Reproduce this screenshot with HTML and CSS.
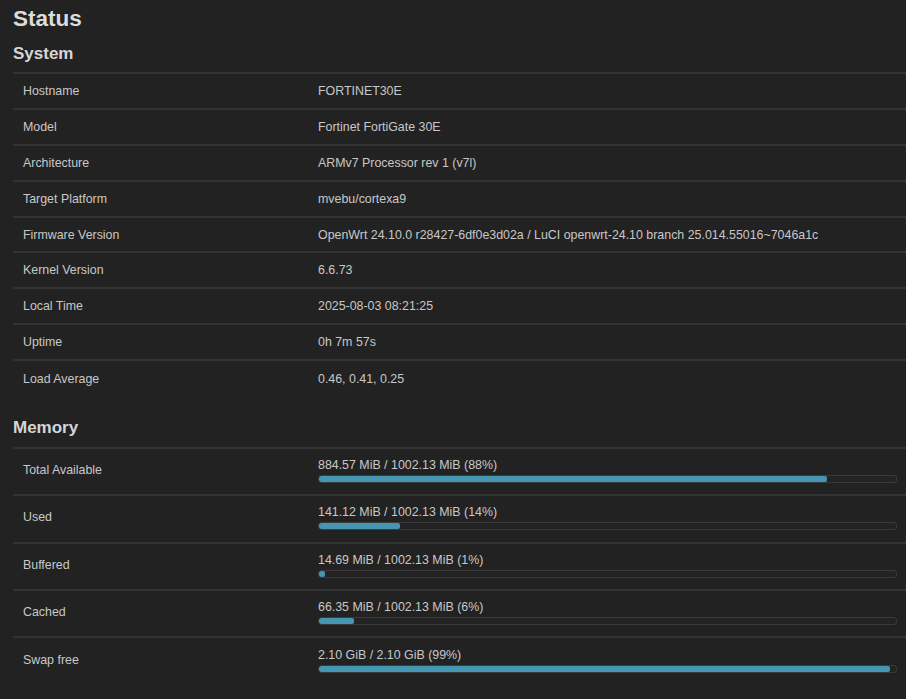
FILE: index.html
```html
<!DOCTYPE html>
<html lang="en">
<head>
    <meta charset="UTF-8">
    <meta name="viewport" content="width=device-width, initial-scale=1.0">
    <title>Status - LuCI</title>
    <link rel="stylesheet" href="styles.css">
</head>
<body>
    <div class="main">
        <h2>Status</h2>

        <div class="section">
            <h3>System</h3>
            <table class="info">
                <tr><td class="key">Hostname</td><td>FORTINET30E</td></tr>
                <tr><td class="key">Model</td><td>Fortinet FortiGate 30E</td></tr>
                <tr><td class="key">Architecture</td><td>ARMv7 Processor rev 1 (v7l)</td></tr>
                <tr><td class="key">Target Platform</td><td>mvebu/cortexa9</td></tr>
                <tr><td class="key">Firmware Version</td><td>OpenWrt 24.10.0 r28427-6df0e3d02a / LuCI openwrt-24.10 branch 25.014.55016~7046a1c</td></tr>
                <tr><td class="key">Kernel Version</td><td>6.6.73</td></tr>
                <tr><td class="key">Local Time</td><td>2025-08-03 08:21:25</td></tr>
                <tr><td class="key">Uptime</td><td>0h 7m 57s</td></tr>
                <tr><td class="key">Load Average</td><td>0.46, 0.41, 0.25</td></tr>
            </table>
        </div>

        <div class="section">
            <h3 class="mem-title">Memory</h3>
            <table class="info mem">
                <tr>
                    <td class="key">Total Available</td>
                    <td>
                        <div class="bar-label">884.57 MiB / 1002.13 MiB (88%)</div>
                        <div class="bar"><div class="fill" style="width: 88%"></div></div>
                    </td>
                </tr>
                <tr>
                    <td class="key">Used</td>
                    <td>
                        <div class="bar-label">141.12 MiB / 1002.13 MiB (14%)</div>
                        <div class="bar"><div class="fill" style="width: 14%"></div></div>
                    </td>
                </tr>
                <tr>
                    <td class="key">Buffered</td>
                    <td>
                        <div class="bar-label">14.69 MiB / 1002.13 MiB (1%)</div>
                        <div class="bar"><div class="fill" style="width: 1%"></div></div>
                    </td>
                </tr>
                <tr>
                    <td class="key">Cached</td>
                    <td>
                        <div class="bar-label">66.35 MiB / 1002.13 MiB (6%)</div>
                        <div class="bar"><div class="fill" style="width: 6%"></div></div>
                    </td>
                </tr>
                <tr>
                    <td class="key">Swap free</td>
                    <td>
                        <div class="bar-label">2.10 GiB / 2.10 GiB (99%)</div>
                        <div class="bar"><div class="fill" style="width: 99%"></div></div>
                    </td>
                </tr>
            </table>
        </div>
    </div>
</body>
</html>
```

FILE: styles.css
```css
*{
    margin: 0;
    padding: 0;
    box-sizing: border-box;
}
html, body{
    background-color: #222222;
    color: #c8c8c8;
    font-family: "Liberation Sans", Arial, Helvetica, sans-serif;
    font-size: 12.4px;
    overflow: hidden;
}
.main{
    padding: 6px 0 0 13px;
}
h2{
    font-size: 22.5px;
    line-height: 26px;
    font-weight: bold;
    color: #dcdcdc;
}
h3{
    font-size: 17px;
    line-height: 20px;
    font-weight: bold;
    color: #d6d6d6;
    margin: 12px 0 8px 0;
}
h3.mem-title{
    margin: 22px 0 9px 0;
}
table.info{
    width: 100%;
    border-collapse: collapse;
}
.info tr{
    border-top: 2px solid #333333;
}
.info td{
    height: 35.9px;
    padding: 0 9px 0 10px;
    line-height: 16px;
    vertical-align: middle;
}
.info td.key{
    width: 295px;
}
.mem td{
    height: 47.25px;
    padding-top: 8px;
    padding-bottom: 11.25px;
}
.mem td.key{
    padding-top: 0;
    padding-bottom: 3px;
}
.bar-label{
    line-height: 16px;
    white-space: nowrap;
}
.bar{
    margin-top: 2px;
    height: 8px;
    border: 1px solid #3a3a3a;
    border-radius: 3px;
    background-color: #232323;
    overflow: hidden;
}
.fill{
    height: 100%;
    background-color: #4596b1;
    border-radius: 2px;
}
```
